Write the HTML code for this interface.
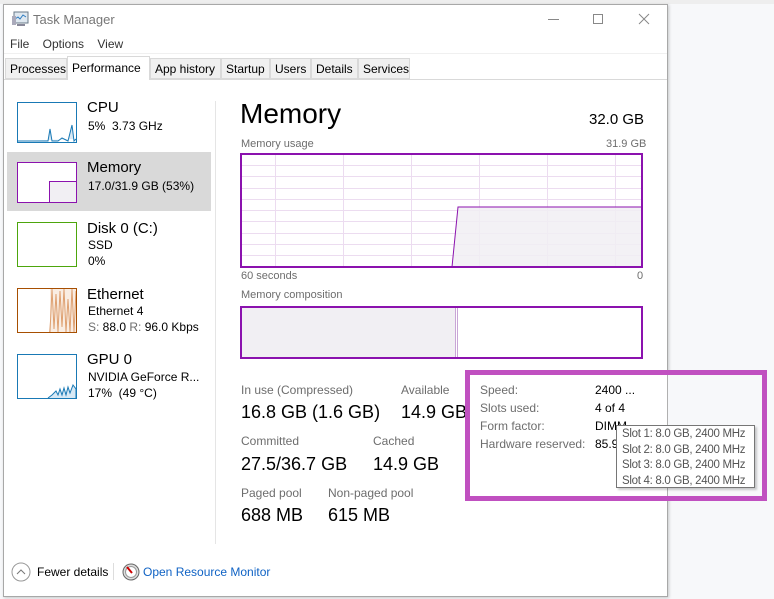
<!DOCTYPE html>
<html><head><meta charset="utf-8"><style>
*{margin:0;padding:0;box-sizing:border-box}
body{width:774px;height:599px;background:#f7f8fa;font-family:"Segoe UI","Liberation Sans",sans-serif;position:relative;overflow:hidden;color:#000}
.a{position:absolute;white-space:nowrap}
#win{position:absolute;left:3px;top:4px;width:665px;height:593px;background:#fff;border:1px solid #a8a8a8;box-shadow:1px 1px 3px rgba(0,0,0,.2)}
.g{color:#6d6d6d}
.tab{position:absolute;top:58px;height:21px;border:1px solid #d9d9d9;background:#f0f0f0;font-size:12px;padding:3px 4px 0;color:#000}
.thumb{position:absolute;left:17px;width:60px;height:41px;border:1px solid}
</style></head><body>
<div class="a" style="left:0;top:0;width:774px;height:4px;background:#eee"></div>
<div id="win"></div>
<svg class="a" style="left:11px;top:11px" width="18" height="16"><rect x="3" y="1" width="14" height="11" fill="#dfe8f0" stroke="#6a7a88"/><polyline points="4,8 7,6 9,8 12,4 15,6" fill="none" stroke="#2b7ac0"/><rect x="1" y="5" width="4" height="9" fill="#aab"/><rect x="6" y="13" width="8" height="2" fill="#889"/></svg>
<div class="a g" style="left:33px;top:12px;font-size:13px;color:#777">Task Manager</div>
<div class="a" style="left:548px;top:19px;width:11px;height:1px;background:#888"></div>
<div class="a" style="left:593px;top:14px;width:10px;height:10px;border:1px solid #888"></div>
<svg class="a" style="left:638px;top:13px" width="12" height="12"><path d="M1 1L11 11M11 1L1 11" stroke="#888"/></svg>
<div class="a" style="left:10px;top:37px;font-size:12px;color:#333">File&nbsp;&nbsp;&nbsp; Options&nbsp;&nbsp;&nbsp; View</div>
<div class="a" style="left:4px;top:53px;width:663px;height:1px;background:#f0f0f0"></div>
<div class="a" style="left:4px;top:79px;width:663px;height:1px;background:#d9d9d9"></div>
<div class="tab" style="left:5px;width:62px">Processes</div>
<div class="tab" style="left:67px;top:56px;height:24px;width:83px;background:#fff;border-bottom:none;padding-top:4px">Performance</div>
<div class="tab" style="left:150px;width:71px">App history</div>
<div class="tab" style="left:221px;width:49px">Startup</div>
<div class="tab" style="left:270px;width:41px">Users</div>
<div class="tab" style="left:311px;width:47px">Details</div>
<div class="tab" style="left:358px;width:52px">Services</div>
<div class="a" style="left:215px;top:101px;width:1px;height:443px;background:#e5e5e5"></div>
<div class="a" style="left:7px;top:152px;width:204px;height:59px;background:#d9d9d9"></div>
<div class="thumb" style="top:102px;border-color:#1979b5;background:#fff"><svg width="58" height="39" style="position:absolute;left:0;top:0"><polyline points="0,38 30,38 32,26 34,38 40,38 44,35 50,38 54,22 56,38 58,36" fill="#d8e9f5" stroke="#1979b5"/></svg></div>
<div class="a" style="left:87px;top:99px;font-size:15px">CPU</div>
<div class="a" style="left:88px;top:119px;font-size:12px">5%&nbsp; 3.73 GHz</div>
<div class="thumb" style="top:162px;border-color:#8b12ae;background:#fff"><div style="position:absolute;left:31px;top:18px;width:27px;height:21px;background:#f1eff3;border-left:1px solid #8b12ae;border-top:1px solid #8b12ae"></div></div>
<div class="a" style="left:87px;top:159px;font-size:15px">Memory</div>
<div class="a" style="left:88px;top:179px;font-size:12px">17.0/31.9 GB (53%)</div>
<div class="thumb" style="top:222px;height:45px;border-color:#4da60c;background:#fff"></div>
<div class="a" style="left:87px;top:220px;font-size:15px">Disk 0 (C:)</div>
<div class="a" style="left:88px;top:238px;font-size:12px">SSD</div>
<div class="a" style="left:88px;top:254px;font-size:12px">0%</div>
<div class="thumb" style="top:288px;height:45px;border-color:#a74f01;background:#fff"><svg width="58" height="43" style="position:absolute;left:0;top:0"><path d="M32 43L34 0L36 40L38 5L40 43L42 2L44 38L46 0L48 43L50 10L52 43L54 0L56 43L58 2" fill="none" stroke="#c8651a" stroke-width="1"/><rect x="32" y="0" width="26" height="43" fill="#f4dcc8" opacity=".5"/></svg></div>
<div class="a" style="left:87px;top:286px;font-size:15px">Ethernet</div>
<div class="a" style="left:88px;top:304px;font-size:12px">Ethernet 4</div>
<div class="a" style="left:88px;top:320px;font-size:12px"><span class="g">S:</span> 88.0 <span class="g">R:</span> 96.0 Kbps</div>
<div class="thumb" style="top:354px;height:45px;border-color:#1979b5;background:#fff"><svg width="58" height="43" style="position:absolute;left:0;top:0"><polyline points="30,43 34,40 38,36 40,40 42,34 44,40 46,33 48,40 50,32 52,38 55,30 58,34 58,43" fill="#d8e9f5" stroke="#1979b5"/></svg></div>
<div class="a" style="left:87px;top:351px;font-size:15px">GPU 0</div>
<div class="a" style="left:88px;top:370px;font-size:12px">NVIDIA GeForce R...</div>
<div class="a" style="left:88px;top:386px;font-size:12px">17%&nbsp; (49 °C)</div>
<div class="a" style="left:240px;top:98px;font-size:28px">Memory</div>
<div class="a" style="left:589px;top:111px;font-size:15px">32.0 GB</div>
<div class="a g" style="left:241px;top:138px;font-size:11px">Memory usage</div>
<div class="a g" style="left:606px;top:138px;font-size:11px">31.9 GB</div>
<svg class="a" style="left:240px;top:153px" width="404" height="116">
<g stroke="#ecdcf0" stroke-width="1">
<path d="M35.5 1V114M103.5 1V114M171.5 1V114M239.5 1V114M307.5 1V114M375.5 1V114"/>
<path d="M1 12.5H402M1 23.5H402M1 35.5H402M1 46.5H402M1 57.5H402M1 68.5H402M1 80.5H402M1 91.5H402M1 102.5H402"/>
</g>
<polygon points="212,114 218,54 402,54 402,114" fill="#f1eff3" opacity=".85"/>
<polyline points="212,114 218,54 402,54" fill="none" stroke="#8b12ae" stroke-width="1"/>
<rect x="1" y="1" width="401" height="113" fill="none" stroke="#8b12ae" stroke-width="2"/>
</svg>
<div class="a g" style="left:241px;top:270px;font-size:11px">60 seconds</div>
<div class="a g" style="left:637px;top:270px;font-size:11px">0</div>
<div class="a g" style="left:241px;top:289px;font-size:11px">Memory composition</div>
<svg class="a" style="left:240px;top:306px" width="404" height="54"><rect x="1" y="1" width="214" height="51" fill="#f1eff3"/><path d="M215.5 1V52M217.5 1V52" stroke="#c9a6d6"/><rect x="1" y="1" width="401" height="51" fill="none" stroke="#8b12ae" stroke-width="2"/></svg>
<div class="a g" style="left:241px;top:383px;font-size:12px">In use (Compressed)</div>
<div class="a" style="left:241px;top:402px;font-size:18px">16.8 GB (1.6 GB)</div>
<div class="a g" style="left:401px;top:383px;font-size:12px">Available</div>
<div class="a" style="left:401px;top:402px;font-size:18px">14.9 GB</div>
<div class="a g" style="left:241px;top:434px;font-size:12px">Committed</div>
<div class="a" style="left:241px;top:454px;font-size:18px">27.5/36.7 GB</div>
<div class="a g" style="left:373px;top:434px;font-size:12px">Cached</div>
<div class="a" style="left:373px;top:454px;font-size:18px">14.9 GB</div>
<div class="a g" style="left:241px;top:486px;font-size:12px">Paged pool</div>
<div class="a" style="left:241px;top:505px;font-size:18px">688 MB</div>
<div class="a g" style="left:328px;top:486px;font-size:12px">Non-paged pool</div>
<div class="a" style="left:328px;top:505px;font-size:18px">615 MB</div>
<div class="a" style="left:465px;top:370px;width:302px;height:131px;border:5px solid #c050c0;background:#fff"></div>
<div class="a" style="left:667px;top:375px;width:95px;height:121px;background:#f7f8fa"></div>
<div class="a" style="left:667px;top:375px;width:1px;height:121px;background:#b0b0b0"></div>
<div class="a g" style="left:480px;top:383px;font-size:12px">Speed:</div>
<div class="a" style="left:595px;top:383px;font-size:12px">2400 ...</div>
<div class="a g" style="left:480px;top:401px;font-size:12px">Slots used:</div>
<div class="a" style="left:595px;top:401px;font-size:12px">4 of 4</div>
<div class="a g" style="left:480px;top:419px;font-size:12px">Form factor:</div>
<div class="a" style="left:595px;top:419px;font-size:12px">DIMM</div>
<div class="a g" style="left:480px;top:437px;font-size:12px">Hardware reserved:</div>
<div class="a" style="left:595px;top:437px;font-size:12px">85.9</div>
<div class="a" style="left:616px;top:425px;width:139px;height:63px;background:#fff;border:1px solid #767676;box-shadow:2px 2px 2px rgba(0,0,0,.2);font-size:11.5px;letter-spacing:-0.3px;color:#555;line-height:15.5px;padding:1px 0 0 5px;overflow:hidden">Slot 1: 8.0 GB, 2400 MHz<br>Slot 2: 8.0 GB, 2400 MHz<br>Slot 3: 8.0 GB, 2400 MHz<br>Slot 4: 8.0 GB, 2400 MHz</div>
<svg class="a" style="left:11px;top:562px" width="20" height="20"><circle cx="10" cy="10" r="9" fill="#fff" stroke="#999"/><path d="M6 12L10 8L14 12" fill="none" stroke="#777"/></svg>
<div class="a" style="left:37px;top:565px;font-size:12px">Fewer details</div>
<div class="a" style="left:113px;top:563px;width:1px;height:17px;background:#ddd"></div>
<svg class="a" style="left:122px;top:563px" width="18" height="18"><circle cx="9" cy="9" r="8" fill="#ddd" stroke="#666"/><circle cx="9" cy="9" r="5.5" fill="#fff" stroke="#999"/><path d="M5 4L10 10" stroke="#c00" stroke-width="2"/></svg>
<div class="a" style="left:143px;top:565px;font-size:12px;color:#0f62c4">Open Resource Monitor</div>
</body></html>
